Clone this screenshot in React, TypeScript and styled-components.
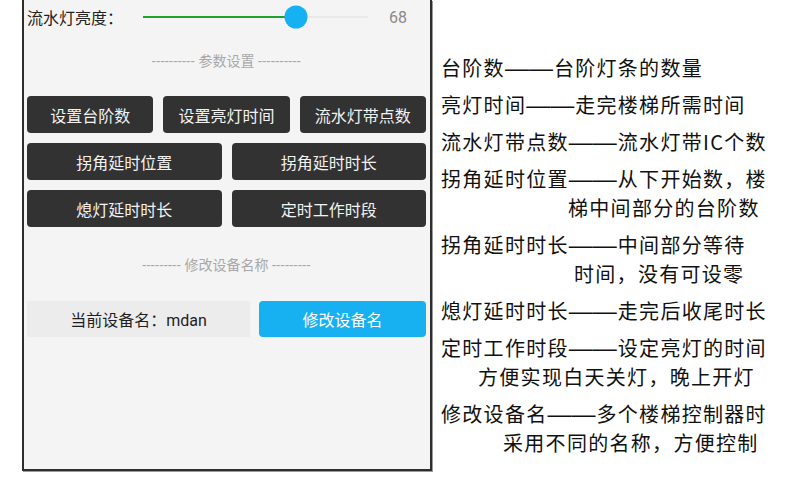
import React from "react";
import styled, { createGlobalStyle } from "styled-components";

const GlobalStyle = createGlobalStyle`
    html, body {
        margin: 0;
        padding: 0;
        background: #ffffff;
    }
    body {
        font-family: Roboto, "Noto Sans CJK SC", sans-serif;
    }
`;

const brightness = 68;

const settingRows: string[][] = [
    ["设置台阶数", "设置亮灯时间", "流水灯带点数"],
    ["拐角延时位置", "拐角延时时长"],
    ["熄灯延时时长", "定时工作时段"],
];

type Note = { term: string; text: string; more?: string; indent?: number };

const notes: Note[] = [
    { term: "台阶数", text: "台阶灯条的数量" },
    { term: "亮灯时间", text: "走完楼梯所需时间" },
    { term: "流水灯带点数", text: "流水灯带IC个数" },
    { term: "拐角延时位置", text: "从下开始数，楼", more: "梯中间部分的台阶数", indent: 127 },
    { term: "拐角延时时长", text: "中间部分等待", more: "时间，没有可设零", indent: 133 },
    { term: "熄灯延时时长", text: "走完后收尾时长" },
    { term: "定时工作时段", text: "设定亮灯的时间", more: "方便实现白天关灯，晚上开灯", indent: 37 },
    { term: "修改设备名", text: "多个楼梯控制器时", more: "采用不同的名称，方便控制", indent: 62 },
];

const App: React.FC = () => {
    return (
        <Page>
            <GlobalStyle />
            <Phone>
                <SliderRow>
                    <SliderLabel>流水灯亮度：</SliderLabel>
                    <Track>
                        <Fill style={{ width: `${brightness}%` }} />
                        <Thumb style={{ left: `${brightness}%` }} />
                    </Track>
                    <SliderValue>{brightness}</SliderValue>
                </SliderRow>

                <Divider $top={17}>
                    <Dashes>----------</Dashes> 参数设置 <Dashes>----------</Dashes>
                </Divider>

                <ButtonGrid>
                    {settingRows.map((row, i) => (
                        <ButtonRow key={i} $cols={row.length}>
                            {row.map(label => (
                                <DarkButton key={label}>{label}</DarkButton>
                            ))}
                        </ButtonRow>
                    ))}
                </ButtonGrid>

                <Divider $top={28}>
                    <Dashes>---------</Dashes> 修改设备名称 <Dashes>---------</Dashes>
                </Divider>

                <NameRow>
                    <NameBox>当前设备名：mdan</NameBox>
                    <BlueButton>修改设备名</BlueButton>
                </NameRow>
            </Phone>

            <Notes>
                {notes.map(note => (
                    <NoteBlock key={note.term}>
                        <NoteLine $indent={0}>
                            {note.term}
                            <Dash>——</Dash>
                            {note.text}
                        </NoteLine>
                        {note.more && <NoteLine $indent={note.indent || 0}>{note.more}</NoteLine>}
                    </NoteBlock>
                ))}
            </Notes>
        </Page>
    );
};

const Page = styled.div`
    display: flex;
    align-items: flex-start;
    width: 790px;
    height: 489px;
    overflow: hidden;
`;

const Phone = styled.div`
    box-sizing: border-box;
    width: 410px;
    height: 471px;
    margin-left: 22px;
    padding: 0 4px 0 3px;
    background: #f4f4f4;
    border: 2px solid #2e2e2e;
    border-top: none;
    box-shadow: 1px 1px 0 #9a9a9a;
    display: flex;
    flex-direction: column;
`;

const SliderRow = styled.div`
    display: flex;
    align-items: center;
    height: 34px;
`;

const SliderLabel = styled.span`
    width: 116px;
    font-size: 16px;
    color: #222;
    font-family: "Noto Sans CJK SC", sans-serif;
`;

const Track = styled.div`
    position: relative;
    width: 225px;
    height: 2px;
    background: #e9e9e9;
`;

const Fill = styled.div`
    height: 2px;
    background: #22a12a;
`;

const Thumb = styled.div`
    position: absolute;
    top: 50%;
    width: 23px;
    height: 23px;
    border-radius: 50%;
    background: #16b1f2;
    transform: translate(-50%, -50%);
`;

const SliderValue = styled.span`
    margin-left: 21px;
    font-size: 16px;
    color: #8a8a8a;
`;

const Divider = styled.div<{ $top: number }>`
    margin-top: ${p => p.$top}px;
    height: 20px;
    line-height: 20px;
    text-align: center;
    font-size: 14px;
    color: #a8a8a8;
    font-family: Roboto, "Noto Sans CJK SC", sans-serif;
    white-space: pre;
`;

const Dashes = styled.span`
    letter-spacing: 0.45px;
`;

const ButtonGrid = styled.div`
    margin-top: 25px;
    display: flex;
    flex-direction: column;
    gap: 10px;
`;

const ButtonRow = styled.div<{ $cols: number }>`
    display: grid;
    grid-template-columns: repeat(${p => p.$cols}, 1fr);
    gap: 10px;
`;

const DarkButton = styled.button`
    height: 37px;
    border: none;
    border-radius: 4px;
    background: #323232;
    color: #f2f2f2;
    font-size: 16px;
    font-family: "Noto Sans CJK SC", sans-serif;
    padding: 0;
`;

const NameRow = styled.div`
    margin-top: 26px;
    display: grid;
    grid-template-columns: 223px 1fr;
    gap: 9px;
    height: 36px;
`;

const NameBox = styled.div`
    display: flex;
    align-items: center;
    justify-content: center;
    background: #ececec;
    color: #1e1e1e;
    font-size: 16px;
    font-family: Roboto, "Noto Sans CJK SC", sans-serif;
`;

const BlueButton = styled.button`
    border: none;
    border-radius: 4px;
    background: #17b1f2;
    color: #ffffff;
    font-size: 16px;
    font-family: "Noto Sans CJK SC", sans-serif;
    padding: 0;
`;

const Notes = styled.div`
    margin-left: 9px;
    padding-top: 53px;
    display: flex;
    flex-direction: column;
    gap: 8px;
`;

const NoteBlock = styled.div`
    display: flex;
    flex-direction: column;
`;

const NoteLine = styled.div<{ $indent: number }>`
    padding-left: ${p => p.$indent}px;
    height: 29px;
    line-height: 29px;
    font-size: 20px;
    letter-spacing: 1.3px;
    color: #111;
    font-family: "Noto Sans CJK SC", sans-serif;
    white-space: nowrap;
`;

const Dash = styled.span`
    font-family: "Liberation Sans", sans-serif;
    font-size: 24px;
    letter-spacing: 0;
    margin-right: 1px;
`;

export default App;
